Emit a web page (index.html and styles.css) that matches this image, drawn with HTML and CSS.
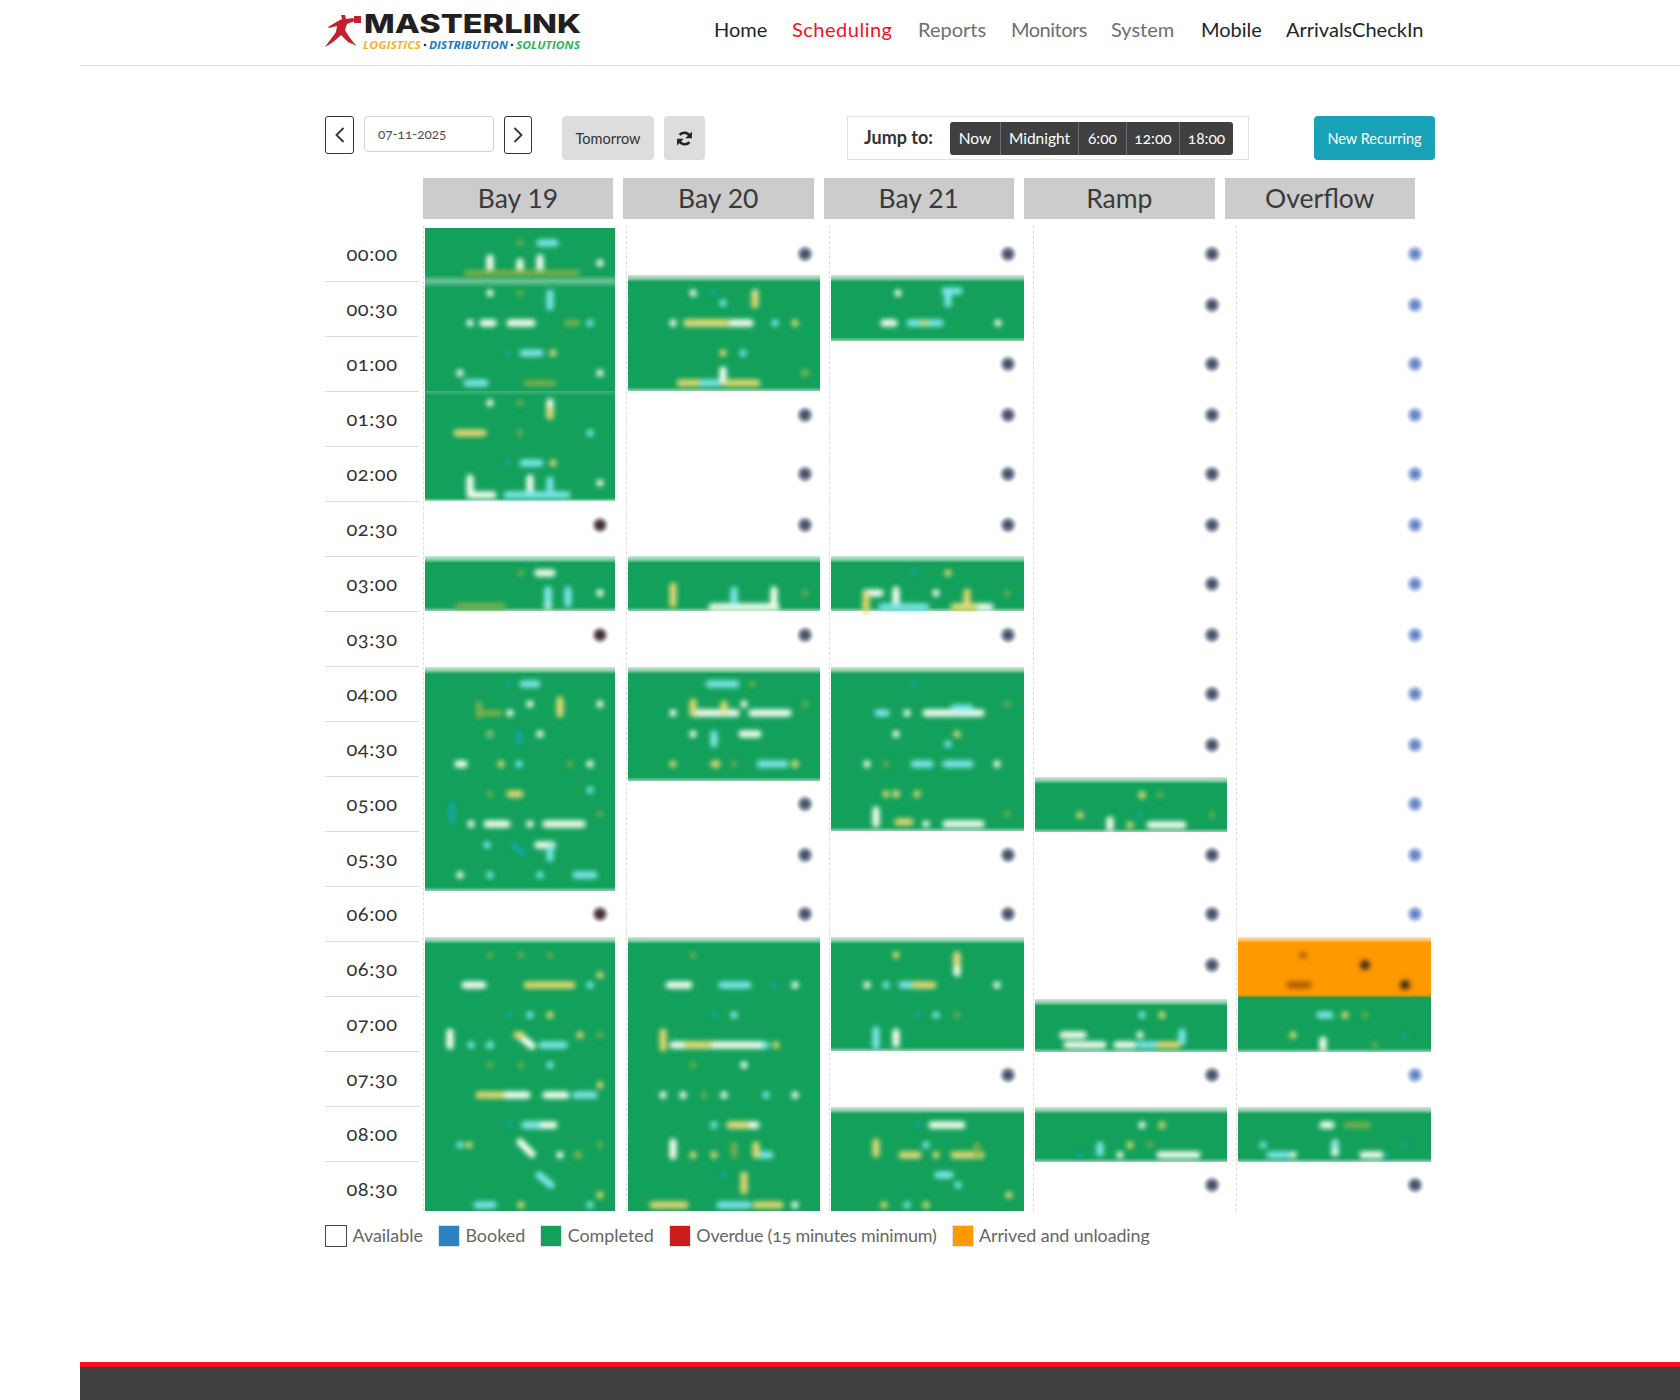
FILE: index.html
```html
<!DOCTYPE html>
<html lang="en">
<head>
<meta charset="utf-8">
<title>Masterlink Scheduling</title>
<link rel="stylesheet" href="styles.css">
</head>
<body>
<div class="page">
  <header class="topbar">
    <svg class="logo" viewBox="0 0 260 40" width="260" height="40">
      <rect class="logo-red" x="30" y="4" width="7" height="7"/>
      <path class="logo-red" d="M1 35C6 28 10 23 12 20L13 14 5 16 4 15 14 9 18 7 17 3 21 3 22 7 29 6 31 9 23 12 21 18C25 25 28 29 33 34L24 30 17 23C12 28 7 32 1 35Z"/>
      <text class="logo-main" x="40" y="21" textLength="217" lengthAdjust="spacingAndGlyphs">MASTERLINK</text>
      <text class="logo-tag tag-a" x="39" y="37" textLength="58" lengthAdjust="spacingAndGlyphs">LOGISTICS</text>
      <circle class="logo-dot" cx="101" cy="33" r="1.3"/>
      <text class="logo-tag tag-b" x="105" y="37" textLength="79" lengthAdjust="spacingAndGlyphs">DISTRIBUTION</text>
      <circle class="logo-dot" cx="188" cy="33" r="1.3"/>
      <text class="logo-tag tag-c" x="192" y="37" textLength="64" lengthAdjust="spacingAndGlyphs">SOLUTIONS</text>
    </svg>
    <nav class="nav">
      <a class="nav-dark">Home</a>
      <a class="nav-active">Scheduling</a>
      <a class="nav-muted">Reports</a>
      <a class="nav-muted nav-tight">Monitors</a>
      <a class="nav-muted">System</a>
      <a class="nav-dark">Mobile</a>
      <a class="nav-dark">ArrivalsCheckIn</a>
    </nav>
  </header>

  <main class="content">
    <div class="toolbar">
      <button class="arrow arrow-prev"><svg viewBox="0 0 12 18" width="12" height="18"><path d="M9.5 2 2.5 9l7 7"/></svg></button>
      <div class="date-input">07-11-2025</div>
      <button class="arrow arrow-next"><svg viewBox="0 0 12 18" width="12" height="18"><path d="M2.5 2l7 7-7 7"/></svg></button>
      <button class="grey-btn tomorrow">Tomorrow</button>
      <button class="grey-btn refresh">
        <svg viewBox="0 0 16 16" width="17" height="17"><path class="ref-arc" d="M13 6.2A5.6 5.6 0 0 0 3.4 4.6"/><path class="ref-head" d="M15 1.5v6.2H8.8z"/><path class="ref-arc" d="M3 9.8a5.6 5.6 0 0 0 9.6 1.6"/><path class="ref-head" d="M1 14.500V8.300h6.200z"/></svg>
      </button>
      <div class="jump">
        <strong class="jump-label">Jump to:</strong>
        <div class="jump-group">
          <span class="j-now">Now</span><span class="j-mid">Midnight</span><span class="j-6">6:00</span><span class="j-12">12:00</span><span class="j-18">18:00</span>
        </div>
      </div>
      <button class="new-btn">New Recurring</button>
    </div>

    <div class="bay-heads">
      <div class="bay">Bay 19</div>
      <div class="bay">Bay 20</div>
      <div class="bay">Bay 21</div>
      <div class="bay">Ramp</div>
      <div class="bay">Overflow</div>
    </div>

    <div class="board">
      <div class="times">
        <div>00:00</div><div>00:30</div><div>01:00</div><div>01:30</div><div>02:00</div><div>02:30</div>
        <div>03:00</div><div>03:30</div><div>04:00</div><div>04:30</div><div>05:00</div><div>05:30</div>
        <div>06:00</div><div>06:30</div><div>07:00</div><div>07:30</div><div>08:00</div><div>08:30</div>
      </div>

      <div class="col col-first">
        <div class="block r1 top-in"></div>
        <div class="block r2 seam"></div>
        <div class="block r2 seam-soft"></div>
        <div class="slot odd tone-a"><i></i></div>
        <div class="block r1"></div>
        <div class="slot odd tone-a"><i></i></div>
        <div class="block r4 t1 down"></div>
        <div class="slot tone-a"><i></i></div>
        <div class="block r5 up"></div>
      </div>

      <div class="col">
        <div class="slot"><i></i></div>
        <div class="block r2 up-more"></div>
        <div class="slot odd"><i></i></div>
        <div class="slot"><i></i></div>
        <div class="slot odd"><i></i></div>
        <div class="block r1"></div>
        <div class="slot odd"><i></i></div>
        <div class="block r2 t1 down"></div>
        <div class="slot"><i></i></div>
        <div class="slot odd"><i></i></div>
        <div class="slot"><i></i></div>
        <div class="block r5 up"></div>
      </div>

      <div class="col">
        <div class="slot"><i></i></div>
        <div class="block r1 up-more down"></div>
        <div class="slot"><i></i></div>
        <div class="slot odd"><i></i></div>
        <div class="slot"><i></i></div>
        <div class="slot odd"><i></i></div>
        <div class="block r1"></div>
        <div class="slot odd"><i></i></div>
        <div class="block r3 t1"></div>
        <div class="slot odd"><i></i></div>
        <div class="slot"><i></i></div>
        <div class="block r2 up"></div>
        <div class="slot odd"><i></i></div>
        <div class="block r2 t1"></div>
      </div>

      <div class="col">
        <div class="slot"><i></i></div><div class="slot odd"><i></i></div>
        <div class="slot"><i></i></div><div class="slot odd"><i></i></div>
        <div class="slot"><i></i></div><div class="slot odd"><i></i></div>
        <div class="slot"><i></i></div><div class="slot odd"><i></i></div>
        <div class="slot"><i></i></div><div class="slot odd"><i></i></div>
        <div class="block r1 t1 low1"></div>
        <div class="slot odd"><i></i></div>
        <div class="slot"><i></i></div>
        <div class="slot odd"><i></i></div>
        <div class="block r1 t3 low1"></div>
        <div class="slot odd"><i></i></div>
        <div class="block r1 t1 low1"></div>
        <div class="slot odd"><i></i></div>
      </div>

      <div class="col tone-b">
        <div class="slot"><i></i></div><div class="slot odd"><i></i></div>
        <div class="slot"><i></i></div><div class="slot odd"><i></i></div>
        <div class="slot"><i></i></div><div class="slot odd"><i></i></div>
        <div class="slot"><i></i></div><div class="slot odd"><i></i></div>
        <div class="slot"><i></i></div><div class="slot odd"><i></i></div>
        <div class="slot"><i></i></div><div class="slot odd"><i></i></div>
        <div class="slot"><i></i></div>
        <div class="block r1 arrived up"></div>
        <div class="block r1 flush low1"></div>
        <div class="slot odd"><i></i></div>
        <div class="block r1 t1 low1"></div>
        <div class="slot odd tone-c"><i></i></div>
      </div>

      <svg class="specks" viewBox="423 226 1010 985" width="1010" height="985">
        <path class="sp w" d="M600 263h0M490 258v12M520 262v10M540 258v12M490 293h0M470 323h0M483 323h10M510 323h22M460 373h0M600 373h0M490 403h0M550 402v14M470 478v12M530 478v14M600 483h0M470 495h23M693 293h0M755 293v2M673 323h0M687 323h63M723 370v12M898 293h0M884 323h10M998 323h0M538 573h14M600 593h0M548 590v16M774 590v16M866 593h14M896 590v14M936 593h0M712 607h64M954 607h36M530 704h0M600 704h0M510 713h0M490 734h0M540 734h0M458 764h6M590 764h0M471 824h0M487 824h20M530 824h0M546 824h36M538 845h14M460 875h0M673 713h0M744 704h0M693 713h43M752 713h36M693 734h0M742 734h16M795 764h0M867 764h0M997 764h0M896 794h0M926 713h55M896 734h0M907 713h0M876 810v14M926 824h0M946 824h35M465 985h18M669 985h20M795 985h0M867 985h0M997 985h0M450 1032v14M490 1045h0M520 1036l12 10M505 1095h22M546 1095h20M525 1125h29M520 1142l12 12M560 1155h0M663 1095h0M683 1095h0M724 1095h0M795 1095h0M734 1015h0M744 1065h0M673 1045h89M673 1142v14M730 1125h26M795 1205h0M896 1032v12M932 1125h30M957 955v18M1142 795h0M1110 820v8M1150 825h33M1063 1035h20M1067 1045h36M1117 1045h16M1140 1035h0M1142 1125h0M1120 1155h0M1160 1155h37M1323 1125h8M1323 1040v8M1293 1155h0M1363 1155h17M1335 1143v10"/>
        <path class="sp c" d="M540 243h15M550 293v14M590 323h0M523 353h17M467 383h18M590 433h0M523 463h17M550 480v8M507 495h60M723 303h0M775 323h0M743 353h0M700 383h17M910 323h30M945 291h14M948 296v8M548 590v12M568 590v14M734 590v12M882 607h44M523 684h14M519 764h0M590 790h0M709 684h27M714 734v10M760 764h25M878 713h8M954 708h16M948 744h0M914 764h16M946 764h24M487 845h0M550 848v10M490 875h0M540 875h0M576 875h18M590 985h0M530 1015h0M471 1045h0M490 1045h0M542 1045h22M550 1065h0M576 1095h18M525 1125h12M460 1145h0M539 1175l12 10M590 1205h0M477 1205h16M530 1015h0M722 985h26M734 1015h0M766 1045h0M766 1095h0M714 1125h0M760 1155h10M720 1205h28M886 985h0M902 985h24M936 1015h0M876 1030v16M926 1145h0M938 1175h12M958 1185h0M907 1205h0M1142 1015h0M1320 1015h10M1182 1032v10M1140 1045h17M1263 1145h0M1335 1145h0M1270 1155h17M1100 1145v8"/>
        <path class="sp y" d="M553 353h0M457 433h26M553 463h0M755 295v10M723 353h0M687 323h40M795 323h0M680 383h17M727 383h30M805 373h0M550 410v6M925 323h0M673 586v18M948 573h0M866 595v15M967 592v12M954 607h20M724 704v6M560 700v14M501 764h0M693 702v10M673 764h0M714 764h3M795 764h0M510 794h10M886 794h0M896 794h0M917 794h0M957 734h0M898 822h12M527 985h45M600 975h0M550 1015h0M580 1035h0M517 1035h4M479 1095h22M600 1085h0M600 1195h0M521 1205h0M469 1145h0M578 1155h0M663 1032v16M776 1045h0M688 1045h20M730 1125h16M744 1175v16M693 1155h0M714 1155h0M756 1145v10M653 1205h32M756 1205h24M896 955h0M957 955v8M915 985h18M876 1142v12M902 1155h16M936 1155h0M954 1155h27M884 1205h0M926 1205h0M1009 1195h0M1080 815h0M1130 825h0M1162 1015h0M1142 795h0M1345 1015h0M1293 1035h0M1162 1125h0M1130 1145h0M1160 1045h17"/>
        <path class="sp o" d="M520 243h0M467 273h110M520 293h0M567 323h10M527 383h26M520 403h0M520 433h0M805 373h0M521 573h0M458 606h45M805 593h0M1007 593h0M479 704v12M479 713h20M490 734h0M570 764h0M752 684h0M805 704h0M734 764h0M1007 704h0M886 764h0M490 794h0M600 814h0M1007 814h0M490 955h0M521 955h0M550 955h0M693 955h0M600 1035h0M490 1065h0M521 1065h0M600 1145h0M578 1155h0M693 1065h0M704 1095h0M734 1145v10M957 1015h0M977 1145v8M1160 795h0M1212 815h0M1150 1145h0M1365 1015h0M1375 1045h0M1347 1125h21"/>
        <path class="sp t" d="M508 353h0M508 463h0M713 293h0M914 573h0M452 805v16M509 684h0M519 734v8M914 684h0M513 845l10 8M774 985h0M510 1015h0M510 1125h0M714 1015h0M724 1175h0M918 1015h0M918 1125h0M1140 815h0M1405 1035h0M1405 1145h0M1080 1155h0M1387 1155h0"/>
        <path class="sp d" d="M1365 965h0M1405 985h0"/>
        <path class="sp b" d="M1290 985h18M1303 955h0"/>
      </svg>
    </div>

    <div class="legend">
      <div class="key"><span class="sw sw-open"></span>Available</div>
      <div class="key"><span class="sw sw-blue"></span>Booked</div>
      <div class="key"><span class="sw sw-green"></span>Completed</div>
      <div class="key key-tight"><span class="sw sw-red"></span>Overdue (15 minutes minimum)</div>
      <div class="key key-snug"><span class="sw sw-orange"></span>Arrived and unloading</div>
    </div>
  </main>

  <footer class="footer"></footer>
</div>
</body>
</html>
```

FILE: styles.css
```css
* { box-sizing: border-box; }
html, body { margin: 0; padding: 0; background: #fff; }
body { font-family: Lato, "Open Sans", sans-serif; color: #333; }

.page {
  margin-left: 80px;
  height: 1400px;
  display: flex;
  flex-direction: column;
  overflow: hidden;
}

/* header */
.topbar {
  height: 66px;
  flex: none;
  border-bottom: 1px solid #dee2e6;
  padding-left: 244px;
  display: flex;
  align-items: flex-start;
}
.logo { margin-top: 12px; flex: none; overflow: visible; }
.logo-red { fill: #c4202f; }
.logo-main {
  font-family: Inter, "Liberation Sans", sans-serif;
  font-weight: 800;
  font-size: 26px;
  fill: #231f20;
}
.logo-tag {
  font-family: "Open Sans", "Liberation Sans", sans-serif;
  font-weight: 700;
  font-style: italic;
  font-size: 11px;
}
.logo-dot { fill: #333; }
.tag-a { fill: #fbb034; }
.tag-b { fill: #1b7bc4; }
.tag-c { fill: #2fb457; }

.nav {
  margin-left: 130px;
  margin-top: 16px;
  display: grid;
  grid-template-columns: 78px 126px 93px 100px 90px 85px auto;
  font-size: 20px;
  line-height: 26px;
}
.nav-dark { color: #212529; }
.nav-active { color: #f5101f; letter-spacing: .5px; }
.nav-muted { color: #6c6f73; }
.nav-tight { letter-spacing: -.5px; }

/* toolbar */
.content { padding-left: 244px; flex: none; }
.toolbar {
  margin-top: 50px;
  height: 44px;
  display: flex;
  align-items: flex-start;
  font-size: 15px;
}
.toolbar button { font-family: inherit; padding: 0; cursor: pointer; }
.arrow {
  width: 29px;
  height: 38px;
  background: #fff;
  border: 1px solid #333;
  border-radius: 3px;
  display: flex;
  align-items: center;
  justify-content: center;
}
.arrow svg path { fill: none; stroke: #333; stroke-width: 1.8; }
.arrow-prev { margin-left: 1px; }
.arrow-next { margin-left: 10px; width: 28px; }
.date-input {
  margin-left: 10px;
  width: 130px;
  height: 36px;
  line-height: 34px;
  padding-left: 13px;
  border: 1px solid #ced4da;
  border-radius: 4px;
  font-size: 13.500px;
  font-variant-numeric: oldstyle-nums;
  color: #495057;
}
.grey-btn {
  height: 44px;
  background: #ddd;
  border: 0;
  border-radius: 4px;
  color: #333;
  display: flex;
  align-items: center;
  justify-content: center;
}
.tomorrow { margin-left: 30px; width: 92px; font-size: 14.500px; }
.refresh { margin-left: 10px; width: 41px; }
.ref-arc { fill: none; stroke: #222; stroke-width: 2.4; }
.ref-head { fill: #222; }
.jump {
  margin-left: 142px;
  width: 402px;
  height: 44px;
  border: 1px solid #dee2e6;
  display: flex;
  align-items: center;
  justify-content: space-between;
  padding: 0 15px 0 16px;
}
.jump-label { font-size: 18px; line-height: 20px; margin-top: -2px; color: #333; }
.jump-group {
  display: flex;
  height: 33px;
  background: #404040;
  border-radius: 3px;
  color: #fff;
  font-size: 15.500px;
  line-height: 33px;
  text-align: center;
  font-variant-numeric: oldstyle-nums;
}
.jump-group span { border-left: 1px solid #6a6f75; }
.jump-group span:first-child { border-left: 0; }
.j-now { width: 50px; }
.j-mid { width: 78px; }
.j-6 { width: 48px; }
.j-12 { width: 53px; }
.j-18 { width: 54px; }
.new-btn {
  margin-left: 65px;
  width: 121px;
  height: 44px;
  background: #17a2b8;
  border: 0;
  border-radius: 4px;
  color: #fff;
  font-size: 14.500px;
}

/* bays */
.bay-heads {
  margin-top: 18px;
  margin-left: 99px;
  display: flex;
  gap: 10px;
}
.bay {
  width: 190.500px;
  height: 41px;
  background: #ccc;
  color: #3a3a3a;
  font-size: 26.500px;
  line-height: 40px;
  text-align: center;
}
.bay:first-child { width: 190px; }

/* board */
.board {
  position: relative;
  margin-top: 7px;
  height: 985px;
  overflow: hidden;
  display: flex;
  width: 1110px;
}
.times { width: 99px; flex: none; padding-top: 1px; }
.times div {
  width: 94px;
  margin-left: 1px;
  height: 55px;
  line-height: 52px;
  border-bottom: 1px solid #dcdcdc;
  text-align: center;
  font-size: 20px;
  letter-spacing: .6px;
  font-variant-numeric: oldstyle-nums;
  color: #333;
}
.col {
  width: 203.400px;
  flex: none;
  display: grid;
  grid-auto-rows: 55px;
  align-content: start;
  border-left: 1px dashed #ddd;
  padding: 0 9px 0 0;
}
.col-first { width: 203px; padding-right: 11px; }

.slot {
  height: 55px;
  display: flex;
  justify-content: flex-end;
  padding: 20px 7.400px 0 0;
}
.col-first .slot { padding-right: 7px; }
.slot.odd { padding-top: 16px; }
.slot i {
  display: block;
  width: 16px;
  height: 16px;
  border-radius: 50%;
  background: radial-gradient(circle, #3f4a60 0, #525d74 30%, rgba(120, 130, 150, .6) 55%, rgba(200, 205, 215, 0) 100%);
  filter: blur(1px);
}
.tone-a i { background: radial-gradient(circle, #3a2430 0, #4d3a42 30%, rgba(130, 115, 125, .6) 55%, rgba(210, 205, 208, 0) 100%); }
.tone-b i { background: radial-gradient(circle, #5a78b8 0, #7190cc 30%, rgba(150, 170, 220, .6) 55%, rgba(215, 222, 240, 0) 100%); }
.tone-b .tone-c i { background: radial-gradient(circle, #3f4a60 0, #525d74 30%, rgba(120, 130, 150, .6) 55%, rgba(200, 205, 215, 0) 100%); }

.block {
  margin-left: 1px;
  background: linear-gradient(#cfe9da 0, #7fcaa2 4px, #12a05a 7px, #12a05a calc(100% - 4px), #8fd0ad 100%);
}
.r1 { grid-row: span 1; }
.r2 { grid-row: span 2; }
.r3 { grid-row: span 3; }
.r4 { grid-row: span 4; }
.r5 { grid-row: span 5; }
.up { margin-top: -4px; }
.up-more { margin-top: -6px; }
.t1 { margin-top: 1px; }
.t3 { margin-top: 3px; }
.low1 { margin-bottom: -1px; }
.down { margin-bottom: -5px; }
.top-in { margin-top: 2px; background: linear-gradient(#12a05a calc(100% - 6px), #6cc096 100%); }
.seam { background: linear-gradient(#6cc096 0, #12a05a 7px); }
.seam-soft { background: linear-gradient(#45ae7d 0, #12a05a 5px, #12a05a calc(100% - 3px), #a8dcbd 100%); }
.arrived {
  background: linear-gradient(#ffe2b8 0, #ffc46e 3px, #ff9900 6px, #ff9900 calc(100% - 3px), #7c9a2c 100%);
  margin-bottom: -1px;
}
.flush {
  margin-top: 1px;
  background: linear-gradient(#12a05a calc(100% - 4px), #8fd0ad 100%);
}

.specks {
  position: absolute;
  left: 99px;
  top: 0;
  filter: blur(2.600px);
  pointer-events: none;
}
.sp { fill: none; stroke-linecap: round; stroke-width: 7; }
.w { stroke: #fbfff6; }
.c { stroke: #80e6ee; }
.y { stroke: #e6d870; }
.o { stroke: #7eb04a; stroke-width: 6; }
.t { stroke: #12a8a8; stroke-width: 6; }
.d { stroke: #3e2a1c; stroke-width: 10; }
.b { stroke: #a85c08; stroke-width: 7; }

/* legend */
.legend {
  margin-top: 14px;
  margin-left: 1px;
  display: flex;
  gap: 15px;
  font-size: 17.900px;
  line-height: 20px;
  color: #666;
  font-variant-numeric: oldstyle-nums;
}
.key { display: flex; align-items: flex-start; gap: 5.500px; }
.key-tight { letter-spacing: -.2px; }
.key-snug { letter-spacing: -.1px; }
.sw { width: 22px; height: 22px; flex: none; border: 1px solid #dee2e6; }
.sw-open { background: #fff; border: 1.500px solid #444; }
.sw-blue { background: #2e82c4; }
.sw-green { background: #12a05a; }
.sw-red { background: #cc1c1c; }
.sw-orange { background: #ff9900; }

/* footer */
.footer {
  margin-top: auto;
  height: 38px;
  flex: none;
  background: #404040;
  border-top: 5px solid #f8101c;
}
```
